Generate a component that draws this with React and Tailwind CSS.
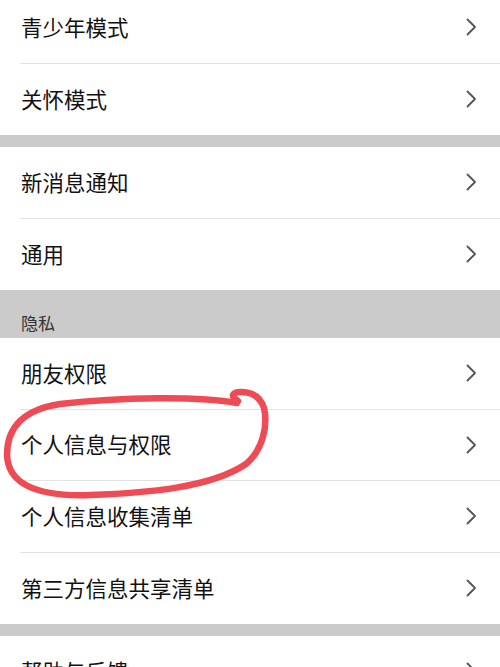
import React from 'react';

const Chevron = () => (
  <svg width="11" height="18" viewBox="0 0 11 18" fill="none" className="shrink-0">
    <polyline points="1.5,1.5 9,9 1.5,16.5" stroke="#555" strokeWidth="1.8" strokeLinecap="round" strokeLinejoin="round" />
  </svg>
);

const Row = ({ label, last }) => (
  <div className="pl-[20px] bg-white">
    <div
      className={
        'h-[71.5px] flex items-center justify-between pr-[23px] ' +
        (last ? '' : 'border-b border-[#e3e3e3]')
      }
    >
      <span className="pl-[1px] pb-[2px] text-[21.5px] leading-none text-[#111]">{label}</span>
      <Chevron />
    </div>
  </div>
);

const Gap = () => <div className="h-[12px] bg-[#cbcbcb]" />;

export default function App() {
  return (
    <div
      className="relative w-[500px] h-[667px] overflow-hidden bg-white"
      style={{ fontFamily: '"Noto Sans CJK SC", "Noto Sans", sans-serif' }}
    >
      <div className="-mt-[8px]">
        <Row label="青少年模式" />
        <Row label="关怀模式" last />
        <Gap />
        <Row label="新消息通知" />
        <Row label="通用" last />
        <div className="h-[48px] bg-[#cbcbcb] flex items-end pb-[7px] pl-[21px]">
          <span className="text-[17px] leading-none text-[#333]">隐私</span>
        </div>
        <Row label="朋友权限" />
        <Row label="个人信息与权限" />
        <Row label="个人信息收集清单" />
        <Row label="第三方信息共享清单" last />
        <Gap />
        <Row label="帮助与反馈" />
      </div>

      {/* red hand-drawn circle */}
      <svg className="absolute inset-0 pointer-events-none" width="500" height="667" viewBox="0 0 500 667">
        <path
          d="M 237 403 C 200 396, 120 397, 60 404 C 22 410, 7 428, 7 455 C 8 482, 32 497, 90 495 C 150 493, 212 487, 246 464 C 263 450, 268 425, 264 408 C 260 396, 251 392, 241 392 C 232 392, 230 396, 238 401"
          fill="none"
          stroke="#ee4b55"
          strokeWidth="6.5"
          strokeLinecap="round"
          strokeLinejoin="round"
        />
      </svg>
    </div>
  );
}
